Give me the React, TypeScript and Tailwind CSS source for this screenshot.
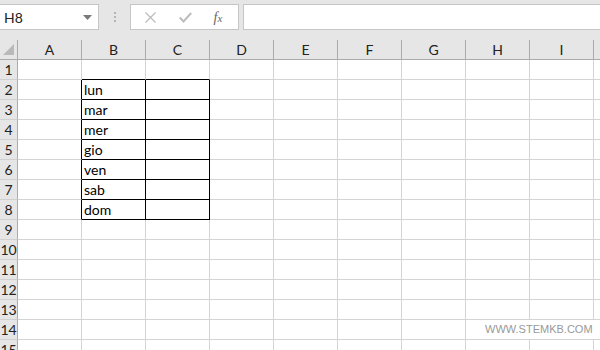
import React from "react";

const cols = ["A", "B", "C", "D", "E", "F", "G", "H", "I", ""];
const rows = Array.from({ length: 15 }, (_, i) => i + 1);
const days: Record<number, string> = { 2: "lun", 3: "mar", 4: "mer", 5: "gio", 6: "ven", 7: "sab", 8: "dom" };

function cellClass(r: number, c: number) {
  const inTable = r >= 2 && r <= 8 && (c === 1 || c === 2);
  const rightBlack = inTable || (c === 0 && r >= 2 && r <= 8);
  const bottomBlack = inTable || ((c === 1 || c === 2) && r === 1);
  return [
    "w-[64px] shrink-0 h-[20px] border-r border-b flex items-center pl-[2px] text-[14px] text-black",
    rightBlack ? "border-r-black" : "border-r-[#d4d4d4]",
    bottomBlack ? "border-b-black" : "border-b-[#d4d4d4]",
  ].join(" ");
}

export default function App() {
  return (
    <div className="relative w-[600px] h-[350px] overflow-hidden bg-white" style={{ fontFamily: "Lato, 'Open Sans', sans-serif" }}>
      {/* toolbar */}
      <div className="h-[30px] bg-[#e6e6e6] flex items-start pt-[4px]">
        <div className="w-[99px] h-[26px] shrink-0 bg-white border border-l-0 border-[#c6c6c6] flex items-center justify-between pl-[4px] pr-[6px]">
          <span className="text-[14px] text-[#222]">H8</span>
          <svg width="9" height="5" viewBox="0 0 9 5"><path d="M0 0 L9 0 L4.5 5 Z" fill="#7a7a7a" /></svg>
        </div>
        <div className="w-[31px] h-[26px] shrink-0 flex flex-col items-center justify-center gap-[2px]">
          <div className="w-[2px] h-[2px] bg-[#b5b5b5]" />
          <div className="w-[2px] h-[2px] bg-[#b5b5b5]" />
          <div className="w-[2px] h-[2px] bg-[#b5b5b5]" />
        </div>
        <div className="w-[109px] h-[26px] shrink-0 bg-white border border-[#c6c6c6] flex items-center">
          <div className="w-[38px] flex justify-center">
            <svg width="11" height="11" viewBox="0 0 11 11"><path d="M0.5 0.5 L10.5 10.5 M10.5 0.5 L0.5 10.5" stroke="#bdbdbd" strokeWidth="1.3" /></svg>
          </div>
          <div className="w-[32px] flex justify-center">
            <svg width="13" height="11" viewBox="0 0 13 11"><path d="M0.8 5.5 L4.5 9.5 L12.2 1" stroke="#bdbdbd" strokeWidth="2" fill="none" /></svg>
          </div>
          <div className="w-[34px] flex justify-center">
            <span className="italic text-[14px] text-[#666]" style={{ fontFamily: "'Liberation Serif', serif" }}>f<span className="text-[11px]">x</span></span>
          </div>
        </div>
        <div className="ml-[4px] flex-1 h-[26px] bg-white border border-r-0 border-[#c6c6c6]" />
      </div>
      <div className="h-[10px] bg-[#e6e6e6]" />
      {/* column header */}
      <div className="flex h-[20px] bg-[#e6e6e6] border-b border-[#ababab]">
        <div className="w-[18px] shrink-0 border-r border-[#ababab] relative">
          <svg className="absolute left-[3px] top-[4px]" width="11" height="11" viewBox="0 0 11 11"><path d="M11 0 L11 11 L0 11 Z" fill="#b9b9b9" /></svg>
        </div>
        {cols.map((c, i) => (
          <div key={i} className="w-[64px] shrink-0 border-r border-[#ababab] flex items-center justify-center text-[14px] text-[#222]">{c}</div>
        ))}
      </div>
      {/* rows */}
      {rows.map((r) => (
        <div key={r} className="flex h-[20px]">
          <div className="w-[18px] shrink-0 h-[20px] bg-[#e6e6e6] border-r border-r-[#ababab] border-b border-b-[#d0d0d0] flex items-center justify-center text-[14px] text-[#222]">{r}</div>
          {cols.map((_, c) => (
            <div key={c} className={cellClass(r, c)}>{c === 1 ? days[r] ?? "" : ""}</div>
          ))}
        </div>
      ))}
      <div className="absolute left-[470px] top-[320px] w-[130px] h-[19px] bg-white flex items-center pl-[15px] text-[11px] text-[#999]" style={{ fontFamily: "'Liberation Sans', sans-serif" }}>
        WWW.STEMKB.COM
      </div>
    </div>
  );
}
